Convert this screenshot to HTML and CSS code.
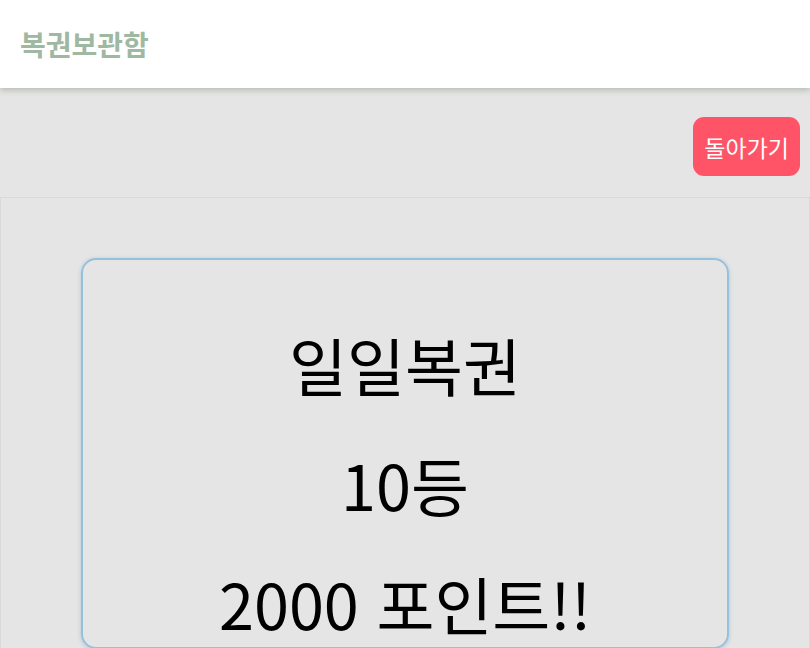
FILE: index.html
```html
<!DOCTYPE html>
<html lang="ko">
<head>
  <meta charset="UTF-8" />
  <meta name="viewport" content="width=device-width, initial-scale=1.0" />
  <title>복권보관함</title>
  <link rel="stylesheet" href="styles.css">
</head>
<body>
  <header class="top-bar">
    <h1 class="title">복권보관함</h1>
  </header>
  <div class="actions">
    <button class="back-button">돌아가기</button>
  </div>
  <section class="lotto-box">
    <div class="lotto-card">
      <p>일일복권</p>
      <p>10등</p>
      <p>2000 포인트!!</p>
    </div>
  </section>
</body>
</html>
```

FILE: styles.css
```css
body {
  font-family: "Noto Sans CJK KR", "Noto Sans", sans-serif;
  margin: 0;
  padding: 0;
  background-color: #e5e5e5;
  color: #000;
  overflow: hidden;
}

.top-bar {
  height: 88px;
  background-color: #fff;
  box-shadow: 0 2px 6px rgba(120, 130, 110, 0.45);
  display: flex;
  align-items: center;
  padding-left: 20px;
  position: relative;
  z-index: 2;
}

.title {
  margin: 0;
  font-size: 28px;
  font-weight: 700;
  color: #9fb8a2;
}

.actions {
  display: flex;
  justify-content: flex-end;
  padding: 29px 10px 21px 0;
}

.back-button {
  height: 59px;
  padding: 0 11px;
  background-color: #ff5468;
  color: #fff;
  border: none;
  border-radius: 11px;
  font-family: inherit;
  font-size: 23px;
}

.lotto-box {
  border: 1px solid #d9d9d9;
  border-bottom: none;
  padding-top: 60px;
  min-height: 500px;
}

.lotto-card {
  width: 80vw;
  margin: 0 auto;
  box-sizing: border-box;
  border: 2px solid #96c0dc;
  border-radius: 15px;
  box-shadow: 0 1px 4px rgba(100, 150, 190, 0.4);
  padding: 66px 0 6px;
  display: flex;
  flex-direction: column;
  gap: 44px;
  text-align: center;
}

.lotto-card p {
  margin: 0;
  font-size: 63px;
  line-height: 1.2;
}
```
